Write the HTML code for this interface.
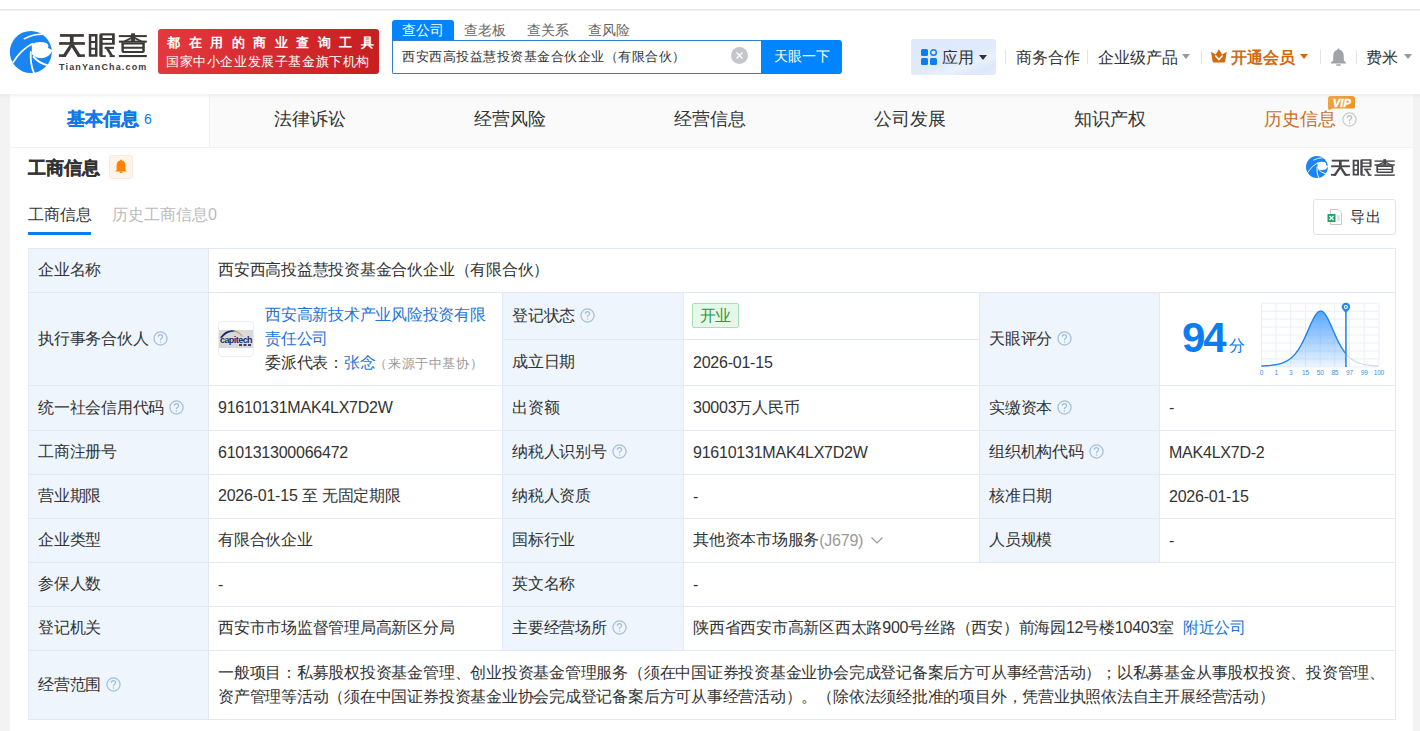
<!DOCTYPE html>
<html><head><meta charset="utf-8">
<style>
*{margin:0;padding:0;box-sizing:border-box}
html,body{width:1420px;height:731px;overflow:hidden}
body{background:#f3f3f3;font-family:"Liberation Sans",sans-serif;color:#333;position:relative;font-size:16px}
.a{position:absolute;white-space:nowrap}
#top{position:absolute;left:0;top:0;width:1420px;height:10px;background:#fff;border-bottom:1px solid #e6e6e6}
#hdr{position:absolute;left:0;top:11px;width:1420px;height:83px;background:#fff;}
#card{position:absolute;left:10px;top:94px;width:1403px;height:640px;background:#fff}
#shd{position:absolute;left:0;top:94px;width:1420px;height:5px;background:linear-gradient(rgba(0,0,0,.045),rgba(0,0,0,0))}
#tabs{position:absolute;left:10px;top:94px;width:1403px;height:54px;background:#fafafa;border-bottom:1px solid #f1f1f1}
.cell{display:flex;align-items:center;padding-left:9px;font-size:16px;color:#333;letter-spacing:-0.23px}
.q{display:inline-block;margin-left:5px;flex:none;position:relative;top:-1px}
.tag{display:inline-block;height:25px;line-height:23px;width:47px;text-align:center;margin-left:-1px;margin-top:-2px;border:1px solid #a6e0b4;background:#e6f8ea;color:#2b9a45;border-radius:2px;font-size:16px}
.lnk{color:#1f74d6}
.logo{position:absolute;left:9px;top:28px;width:36px;height:36px;border:1px solid #eee;border-radius:4px;background:#fff;overflow:hidden}
.logoin{position:absolute;left:1px;top:8px;width:32px;height:18px;background:#d9d9d9;color:#1b2f6b;font-size:8px;font-weight:700;font-style:italic;line-height:20px;text-align:center;letter-spacing:-0.3px}
</style></head><body>
<div id="top"></div>
<div id="hdr"></div>
<div id="card"></div>
<div id="tabs"></div>
<!-- header -->
<svg class="a" style="left:6px;top:27px" width="52" height="50" viewBox="0 0 52 50">
<circle cx="24.8" cy="25" r="21" fill="#1a85f2"/>
<path d="M25.7 17.1Q32.9 13.7 40.4 16.1Q43.6 18.5 41.8 20.8L46.5 23.3Q43 31 35.6 31.2Q29.5 31 26 27.4Z" fill="#fff"/>
<g fill="none" stroke="#fff" stroke-linecap="round">
<path d="M18.4 11.7Q27.4 7.2 36.3 7.3" stroke-width="1.6"/>
<path d="M7.2 35.3Q15 22.6 26.4 16.8" stroke-width="1.7"/>
<path d="M24.8 25Q24 37 28 46" stroke-width="1.8"/>
<path d="M27.6 29.8Q32.2 35.6 41.8 38.4" stroke-width="1.9"/>
</g>
</svg>
<svg class="a" style="left:56px;top:28px" width="96" height="32" viewBox="56 28 96 32">
<g fill="#3d3939">
<rect x="59.9" y="34.1" width="24" height="2.7"/>
<rect x="59.1" y="42.1" width="25.8" height="2.7"/>
<rect x="69.9" y="36" width="3.7" height="7"/>
<rect x="58.9" y="54.3" width="7" height="2.6"/>
<rect x="78.6" y="54.3" width="6.3" height="2.6"/>
<path d="M69.8 44.6H73.6L65.6 56.9H61.6Z"/>
<path d="M70 44.6H73.8L81.8 56.9H77.8Z"/>
<path d="M88.8 34.1H97.5V56.7H88.8ZM91.3 36.6V41.1H95V36.6ZM91.3 43.1V47.7H95V43.1ZM91.3 49.7V54.2H95V49.7Z" fill-rule="evenodd"/>
<path d="M101.3 33.3H114.8V44.8H102.6V55.2H105.8V57.1H101.3Q99.3 57.1 99.3 55.2V35.3Q99.3 33.3 101.3 33.3ZM102.6 35.5V38H112V35.5ZM102.6 40V42.7H112V40Z" fill-rule="evenodd"/>
<rect x="104.6" y="46.8" width="9.4" height="2.1"/>
<path d="M105.6 48.5H108.8L113.2 55.4H110Z"/>
<rect x="109.6" y="55.1" width="5.2" height="2"/>
<rect x="118.9" y="35.1" width="27.9" height="2"/>
<rect x="131.1" y="33.3" width="3.8" height="8"/>
<path d="M131.2 36.9L133 38.3L124 42.5H120.5Z"/>
<path d="M134.8 36.9L133 38.3L142 42.5H145.5Z"/>
<rect x="118.9" y="40.6" width="27.9" height="2.1"/>
<path d="M121.4 42.5H144.8V51Q144.8 53 142.8 53H123.4Q121.4 53 121.4 51ZM123.8 44.4V46.8H142.3V44.4ZM123.8 48.7V50.9H142.3V48.7Z" fill-rule="evenodd"/>
<rect x="118.9" y="55" width="27.9" height="2.1"/>
</g>
</svg>
<div class="a" style="left:59px;top:62px;font-size:9px;line-height:11px;font-weight:700;color:#3d3939;letter-spacing:1.15px">TianYanCha.com</div>
<div class="a" style="left:158px;top:29px;width:221px;height:45px;border-radius:3px;background:linear-gradient(90deg,#e3393e,#c71e22)"></div>
<div class="a" style="left:167px;top:34px;font-size:13px;font-weight:700;color:#fff;letter-spacing:8.5px">都在用的商业查询工具</div>
<div class="a" style="left:166px;top:53px;font-size:13px;color:#fff;letter-spacing:0.6px">国家中小企业发展子基金旗下机构</div>

<div class="a" style="left:392px;top:20px;width:62px;height:21px;background:#0084ff;border-radius:3px 3px 0 0"></div>
<div class="a" style="left:402px;top:21px;font-size:14px;line-height:19px;color:#fff">查公司</div>
<div class="a" style="left:464px;top:21px;font-size:14px;line-height:19px;color:#666">查老板</div>
<div class="a" style="left:527px;top:21px;font-size:14px;line-height:19px;color:#666">查关系</div>
<div class="a" style="left:588px;top:21px;font-size:14px;line-height:19px;color:#666">查风险</div>
<div class="a" style="left:392px;top:40px;width:370px;height:34px;border:1px solid #2f7dcc;border-right:0;border-radius:0 0 0 2px;background:#fff"></div>
<div class="a" style="left:402px;top:47px;font-size:13px;line-height:20px;color:#333;letter-spacing:0.5px">西安西高投益慧投资基金合伙企业（有限合伙）</div>
<div class="a" style="left:731px;top:47px;width:17px;height:17px;border-radius:50%;background:#c5c6cb"></div>
<svg class="a" style="left:731px;top:47px" width="17" height="17"><path d="M5.5 5.5L11.5 11.5M11.5 5.5L5.5 11.5" stroke="#fff" stroke-width="1.4"/></svg>
<div class="a" style="left:761px;top:40px;width:81px;height:34px;background:#0084ff;border-radius:0 3px 3px 0"></div>
<div class="a" style="left:774px;top:46px;font-size:14px;line-height:20px;color:#fff">天眼一下</div>

<div class="a" style="left:911px;top:39px;width:85px;height:36px;border-radius:3px;background:linear-gradient(160deg,#deeafb 0%,#dfebfb 55%,#e9f1fc 70%,#dbe7fa 85%,#e2ecfb 100%)"></div>
<svg class="a" style="left:921px;top:49px" width="16" height="16" viewBox="0 0 16 16">
<rect x="0" y="0" width="7" height="7" rx="1.5" fill="#0a7cf4"/>
<circle cx="12.5" cy="3.5" r="2.8" fill="none" stroke="#0a7cf4" stroke-width="1.4"/>
<rect x="0" y="9" width="7" height="7" rx="1.5" fill="#0a7cf4"/>
<rect x="9" y="9" width="7" height="7" rx="1.5" fill="#0a7cf4"/>
</svg>
<div class="a" style="left:942px;top:47px;font-size:16px;line-height:22px;color:#333">应用</div>
<svg class="a" style="left:979px;top:55px" width="8" height="5"><path d="M0 0H8L4 5Z" fill="#333"/></svg>
<div class="a" style="left:1005px;top:50px;width:1px;height:14px;background:#e3e3e3"></div>
<div class="a" style="left:1016px;top:47px;font-size:16px;line-height:22px;color:#333">商务合作</div>
<div class="a" style="left:1087px;top:50px;width:1px;height:14px;background:#e3e3e3"></div>
<div class="a" style="left:1098px;top:47px;font-size:16px;line-height:22px;color:#333">企业级产品</div>
<svg class="a" style="left:1182px;top:54px" width="8" height="5"><path d="M0 0H8L4 5Z" fill="#999"/></svg>
<div class="a" style="left:1201px;top:50px;width:1px;height:14px;background:#e3e3e3"></div>
<svg class="a" style="left:1211px;top:49px" width="16" height="14" viewBox="0 0 16 14">
<path d="M0 2.8L4.6 5.6L7.9 0.2L11.2 5.6L15.7 2.8L14.1 12.8Q13.9 13.6 13 13.6H2.8Q1.9 13.6 1.7 12.8Z" fill="#d4690c"/>
<path d="M4.3 6.6L7.9 10.6L11.6 6.6" stroke="#fff" stroke-width="1.5" fill="none"/>
</svg>
<div class="a" style="left:1231px;top:47px;font-size:16px;line-height:22px;color:#d4690c;font-weight:700">开通会员</div>
<svg class="a" style="left:1300px;top:54px" width="8" height="5"><path d="M0 0H8L4 5Z" fill="#d4690c"/></svg>
<div class="a" style="left:1320px;top:50px;width:1px;height:14px;background:#e3e3e3"></div>
<svg class="a" style="left:1330px;top:48px" width="17" height="18" viewBox="0 0 17 18">
<path d="M8.5 0.5C9.3 0.5 9.6 1 9.6 1.7C12.5 2.4 13.8 4.8 13.8 8V12.5L16 14.5V15.5H1V14.5L3.2 12.5V8C3.2 4.8 4.5 2.4 7.4 1.7C7.4 1 7.7 0.5 8.5 0.5Z" fill="#a0a3a8"/>
<rect x="6" y="16.2" width="5" height="1.6" rx="0.8" fill="#a0a3a8"/>
</svg>
<div class="a" style="left:1356px;top:50px;width:1px;height:14px;background:#e3e3e3"></div>
<div class="a" style="left:1366px;top:47px;font-size:16px;line-height:22px;color:#333">费米</div>
<svg class="a" style="left:1404px;top:54px" width="8" height="5"><path d="M0 0H8L4 5Z" fill="#999"/></svg>
<!-- tabs -->
<div class="a" style="left:10px;top:94px;width:200px;height:53px;background:#fff;border-right:1px solid #efefef"></div>
<div class="a" style="left:67px;top:107px;font-size:18px;line-height:24px;color:#1079ea;font-weight:700;-webkit-text-stroke:0.35px #1079ea">基本信息<span style="font-size:14px;font-weight:400;margin-left:5px;-webkit-text-stroke:0;position:relative;top:-1px">6</span></div>
<div class="a" style="left:274px;top:107px;font-size:18px;line-height:24px;color:#333">法律诉讼</div>
<div class="a" style="left:474px;top:107px;font-size:18px;line-height:24px;color:#333">经营风险</div>
<div class="a" style="left:674px;top:107px;font-size:18px;line-height:24px;color:#333">经营信息</div>
<div class="a" style="left:874px;top:107px;font-size:18px;line-height:24px;color:#333">公司发展</div>
<div class="a" style="left:1074px;top:107px;font-size:18px;line-height:24px;color:#333">知识产权</div>
<div class="a" style="left:1264px;top:107px;font-size:18px;line-height:24px;color:#c66f2a">历史信息</div>
<svg class="a" style="left:1342px;top:111.5px" width="15" height="15" viewBox="0 0 15 15"><circle cx="7.5" cy="7.5" r="6.6" fill="none" stroke="#c6cace" stroke-width="1.25"/><path d="M5.3 5.8Q5.3 3.6 7.5 3.6Q9.6 3.6 9.6 5.5Q9.6 6.6 8.5 7.2Q7.5 7.7 7.5 8.9V9.3" fill="none" stroke="#b9bec4" stroke-width="1.25"/><circle cx="7.5" cy="11" r="0.75" fill="#b9bec4"/></svg>
<svg class="a" style="left:1327px;top:95px" width="30" height="17" viewBox="0 0 30 17">
<defs><linearGradient id="vg" x1="0" x2="1" y1="0" y2="1"><stop offset="0" stop-color="#f3aa48"/><stop offset="1" stop-color="#e98f22"/></linearGradient></defs>
<path d="M3.5 1H25.5Q28 1 28 3.5V11Q28 13.6 25.5 13.6H5.2L1.8 15.6L1 12.2V3.5Q1 1 3.5 1Z" fill="url(#vg)"/>
<text x="14.8" y="11.6" font-family="Liberation Sans" font-weight="700" font-style="italic" font-size="11" fill="#fff" stroke="#fff" stroke-width="0.4" text-anchor="middle" letter-spacing="0.2">VIP</text>
</svg>

<!-- section title -->
<div class="a" style="left:28px;top:156px;font-size:18px;line-height:24px;font-weight:700;color:#333;-webkit-text-stroke:0.35px #333">工商信息</div>
<div class="a" style="left:109px;top:155px;width:24px;height:24px;border-radius:3px;background:#fff4ea;border:1px solid #fcebdc"></div>
<svg class="a" style="left:115px;top:159px" width="12" height="15" viewBox="0 0 12 15">
<path d="M6 0.6Q6.8 0.6 6.9 1.5Q10.4 2.3 10.4 6.5V11L11.8 12.6H0.2L1.6 11V6.5Q1.6 2.3 5.1 1.5Q5.2 0.6 6 0.6Z" fill="#ff8206"/>
<path d="M4.2 12.6Q4.6 14.2 6 14.2Q7.4 14.2 7.8 12.6Z" fill="#ff8206"/>
</svg>
<svg class="a" style="left:1306px;top:156.3px" width="21.9" height="21.9" viewBox="3.8 4 42 42">
<circle cx="24.8" cy="25" r="21" fill="#1a85f2"/>
<path d="M25.7 17.1Q32.9 13.7 40.4 16.1Q43.6 18.5 41.8 20.8L46.5 23.3Q43 31 35.6 31.2Q29.5 31 26 27.4Z" fill="#fff"/>
<g fill="none" stroke="#fff" stroke-linecap="round">
<path d="M18.4 11.7Q27.4 7.2 36.3 7.3" stroke-width="1.6"/>
<path d="M7.2 35.3Q15 22.6 26.4 16.8" stroke-width="1.7"/>
<path d="M24.8 25Q24 37 28 46" stroke-width="1.8"/>
<path d="M27.6 29.8Q32.2 35.6 41.8 38.4" stroke-width="1.9"/>
</g>
</svg><svg class="a" style="left:1331.3px;top:159.2px" width="64.1" height="16.8" viewBox="58.9 33.1 88.4 23.9" preserveAspectRatio="none">
<g fill="#48474c">
<rect x="59.9" y="34.1" width="24" height="2.7"/>
<rect x="59.1" y="42.1" width="25.8" height="2.7"/>
<rect x="69.9" y="36" width="3.7" height="7"/>
<rect x="58.9" y="54.3" width="7" height="2.6"/>
<rect x="78.6" y="54.3" width="6.3" height="2.6"/>
<path d="M69.8 44.6H73.6L65.6 56.9H61.6Z"/>
<path d="M70 44.6H73.8L81.8 56.9H77.8Z"/>
<path d="M88.8 34.1H97.5V56.7H88.8ZM91.3 36.6V41.1H95V36.6ZM91.3 43.1V47.7H95V43.1ZM91.3 49.7V54.2H95V49.7Z" fill-rule="evenodd"/>
<path d="M101.3 33.3H114.8V44.8H102.6V55.2H105.8V57.1H101.3Q99.3 57.1 99.3 55.2V35.3Q99.3 33.3 101.3 33.3ZM102.6 35.5V38H112V35.5ZM102.6 40V42.7H112V40Z" fill-rule="evenodd"/>
<rect x="104.6" y="46.8" width="9.4" height="2.1"/>
<path d="M105.6 48.5H108.8L113.2 55.4H110Z"/>
<rect x="109.6" y="55.1" width="5.2" height="2"/>
<rect x="118.9" y="35.1" width="27.9" height="2"/>
<rect x="131.1" y="33.3" width="3.8" height="8"/>
<path d="M131.2 36.9L133 38.3L124 42.5H120.5Z"/>
<path d="M134.8 36.9L133 38.3L142 42.5H145.5Z"/>
<rect x="118.9" y="40.6" width="27.9" height="2.1"/>
<path d="M121.4 42.5H144.8V51Q144.8 53 142.8 53H123.4Q121.4 53 121.4 51ZM123.8 44.4V46.8H142.3V44.4ZM123.8 48.7V50.9H142.3V48.7Z" fill-rule="evenodd"/>
<rect x="118.9" y="55" width="27.9" height="2.1"/>
</g>
</svg>

<div class="a" style="left:28px;top:204px;font-size:16px;line-height:22px;color:#333">工商信息</div>
<div class="a" style="left:28px;top:232px;width:63px;height:3px;background:#0a7cf4"></div>
<div class="a" style="left:112px;top:204px;font-size:16px;line-height:22px;color:#bbb">历史工商信息0</div>
<div class="a" style="left:1313px;top:199px;width:83px;height:36px;border:1px solid #e3e3e3;border-radius:3px;background:#fff"></div>
<svg class="a" style="left:1327px;top:209px" width="16" height="16" viewBox="0 0 16 16">
<path d="M3.5 0.5H11L14.5 4V15.5H3.5Z" fill="#fff" stroke="#c8c8c8"/>
<rect x="0.5" y="5" width="8" height="8" fill="#21a366"/>
<path d="M2.5 7L6.5 11M6.5 7L2.5 11" stroke="#fff" stroke-width="1.3"/>
<path d="M10 7H13M10 9H13M10 11H13" stroke="#c8c8c8"/>
</svg>
<div class="a" style="left:1350px;top:206px;font-size:15px;line-height:22px;color:#333;letter-spacing:1px">导出</div>
<div class="a" style="left:28px;top:248px;width:1368px;height:472px;background:#e2e9f1"></div>
<div class="a cell" style="left:29px;top:249px;width:179px;height:43px;background:#eef5fc;">企业名称</div>
<div class="a cell" style="left:209px;top:249px;width:1186px;height:43px;background:#fff;">西安西高投益慧投资基金合伙企业（有限合伙）</div>
<div class="a cell" style="left:29px;top:293px;width:179px;height:92px;background:#eef5fc;">执行事务合伙人<svg class="q" width="15" height="15" viewBox="0 0 15 15"><circle cx="7.5" cy="7.5" r="6.6" fill="none" stroke="#a3bedb" stroke-width="1.25"/><path d="M5.3 5.8Q5.3 3.6 7.5 3.6Q9.6 3.6 9.6 5.5Q9.6 6.6 8.5 7.2Q7.5 7.7 7.5 8.9V9.3" fill="none" stroke="#a3bedb" stroke-width="1.25"/><circle cx="7.5" cy="11" r="0.75" fill="#a3bedb"/></svg></div>
<div class="a cell" style="left:209px;top:293px;width:293px;height:92px;background:#fff;"><div class="logo"><svg style="position:absolute;left:0;top:0" width="34" height="34" viewBox="0 0 34 34"><rect x="0" y="8" width="34" height="18" fill="#d9d9d9"/><path d="M0.8 15.8Q7 7 15.5 8.6L16 9.6Q9 9.2 3 15.8Z" fill="#1a2d66"/><path d="M15.5 8.6Q21 9.6 23.6 14.6L22.8 14.8Q20 10.6 15.6 9.6Z" fill="#b99a45"/><text x="17" y="21.4" font-family="Liberation Sans" font-weight="700" font-size="9" fill="#1a2d66" text-anchor="middle" letter-spacing="-0.55">capitech</text><path d="M20 23H23M24.5 23H27.5M29 23H32" stroke="#3a4670" stroke-width="2"/></svg></div>
<div class="a" style="left:56px;top:10px;line-height:24px;white-space:normal;width:225px"><span class="lnk">西安高新技术产业风险投资有限<br>责任公司</span><br>委派代表：<span class="lnk">张念</span><span style="color:#999;font-size:13px;margin-left:-1px;letter-spacing:0.6px">（来源于中基协）</span></div></div>
<div class="a cell" style="left:503px;top:293px;width:180px;height:46px;background:#eef5fc;">登记状态<svg class="q" width="15" height="15" viewBox="0 0 15 15"><circle cx="7.5" cy="7.5" r="6.6" fill="none" stroke="#a3bedb" stroke-width="1.25"/><path d="M5.3 5.8Q5.3 3.6 7.5 3.6Q9.6 3.6 9.6 5.5Q9.6 6.6 8.5 7.2Q7.5 7.7 7.5 8.9V9.3" fill="none" stroke="#a3bedb" stroke-width="1.25"/><circle cx="7.5" cy="11" r="0.75" fill="#a3bedb"/></svg></div>
<div class="a cell" style="left:684px;top:293px;width:295px;height:46px;background:#fff;"><span class="tag">开业</span></div>
<div class="a cell" style="left:503px;top:340px;width:180px;height:45px;background:#eef5fc;">成立日期</div>
<div class="a cell" style="left:684px;top:340px;width:295px;height:45px;background:#fff;">2026-01-15</div>
<div class="a cell" style="left:980px;top:293px;width:179px;height:92px;background:#eef5fc;">天眼评分<svg class="q" width="15" height="15" viewBox="0 0 15 15"><circle cx="7.5" cy="7.5" r="6.6" fill="none" stroke="#a3bedb" stroke-width="1.25"/><path d="M5.3 5.8Q5.3 3.6 7.5 3.6Q9.6 3.6 9.6 5.5Q9.6 6.6 8.5 7.2Q7.5 7.7 7.5 8.9V9.3" fill="none" stroke="#a3bedb" stroke-width="1.25"/><circle cx="7.5" cy="11" r="0.75" fill="#a3bedb"/></svg></div>
<div class="a cell" style="left:1160px;top:293px;width:235px;height:92px;background:#fff;"><div class="a" style="left:22px;top:22px;font-size:42px;line-height:46px;font-weight:700;color:#0a7cf4;letter-spacing:-2px">94</div><div class="a" style="left:69px;top:43px;font-size:16px;line-height:20px;color:#0a7cf4">分</div>
<svg class="a" style="left:100px;top:8px" width="130" height="80" viewBox="0 0 130 80">
<defs><linearGradient id="sg" x1="0" x2="0" y1="0" y2="1"><stop offset="0" stop-color="#3a98ff" stop-opacity=".85"/><stop offset="1" stop-color="#3a98ff" stop-opacity=".1"/></linearGradient></defs>
<path d="M1.4 2.2V65.9 M16.1 2.2V65.9 M30.8 2.2V65.9 M45.5 2.2V65.9 M60.2 2.2V65.9 M74.8 2.2V65.9 M89.5 2.2V65.9 M104.2 2.2V65.9 M118.9 2.2V65.9 M1.4 2.2H118.9 M1.4 10.2H118.9 M1.4 18.1H118.9 M1.4 26.1H118.9 M1.4 34.0H118.9 M1.4 42.0H118.9 M1.4 50.0H118.9 M1.4 57.9H118.9 M1.4 65.9H118.9" stroke="#e9eff7" stroke-width="1" fill="none"/>
<path d="M1.40 65.03 L2.40 64.99 L3.40 64.95 L4.40 64.89 L5.40 64.84 L6.40 64.77 L7.40 64.70 L8.40 64.62 L9.40 64.53 L10.40 64.44 L11.40 64.33 L12.40 64.21 L13.40 64.07 L14.40 63.92 L15.40 63.76 L16.40 63.57 L17.40 63.37 L18.40 63.14 L19.40 62.89 L20.40 62.61 L21.40 62.30 L22.40 61.95 L23.40 61.57 L24.40 61.15 L25.40 60.69 L26.40 60.18 L27.40 59.61 L28.40 58.99 L29.40 58.31 L30.40 57.56 L31.40 56.74 L32.40 55.84 L33.40 54.86 L34.40 53.79 L35.40 52.62 L36.40 51.36 L37.40 50.00 L38.40 48.53 L39.40 46.96 L40.40 45.28 L41.40 43.49 L42.40 41.60 L43.40 39.61 L44.40 37.53 L45.40 35.37 L46.40 33.14 L47.40 30.87 L48.40 28.58 L49.40 26.28 L50.40 24.01 L51.40 21.80 L52.40 19.69 L53.40 17.70 L54.40 15.87 L55.40 14.25 L56.40 12.86 L57.40 11.72 L58.40 10.87 L59.40 10.33 L60.40 10.11 L61.40 10.20 L62.40 10.62 L63.40 11.35 L64.40 12.37 L65.40 13.66 L66.40 15.20 L67.40 16.95 L68.40 18.87 L69.40 20.94 L70.40 23.12 L71.40 25.37 L72.40 27.65 L73.40 29.95 L74.40 32.24 L75.40 34.48 L76.40 36.67 L77.40 38.79 L78.40 40.81 L79.40 42.74 L80.40 44.57 L81.40 46.30 L82.40 47.92 L83.40 49.43 L84.40 50.83 L85.40 52.13 L86.40 53.33 L87.40 54.44 L88.40 55.46 L89.40 56.39 L90.40 57.24 L91.40 58.02 L92.40 58.73 L93.40 59.37 L94.40 59.96 L95.40 60.49 L96.40 60.97 L97.40 61.41 L98.40 61.81 L99.40 62.16 L100.40 62.49 L101.40 62.78 L102.40 63.04 L103.40 63.28 L104.40 63.49 L105.40 63.68 L106.40 63.86 L107.40 64.01 L108.40 64.15 L109.40 64.28 L110.40 64.39 L111.40 64.50 L112.40 64.59 L113.40 64.67 L114.40 64.74 L115.40 64.81 L116.40 64.87 L117.40 64.93 L118.40 64.97" fill="none" stroke="#d3d9e0" stroke-width="1.2"/>
<path d="M1.40 65.03 L2.40 64.99 L3.40 64.95 L4.40 64.89 L5.40 64.84 L6.40 64.77 L7.40 64.70 L8.40 64.62 L9.40 64.53 L10.40 64.44 L11.40 64.33 L12.40 64.21 L13.40 64.07 L14.40 63.92 L15.40 63.76 L16.40 63.57 L17.40 63.37 L18.40 63.14 L19.40 62.89 L20.40 62.61 L21.40 62.30 L22.40 61.95 L23.40 61.57 L24.40 61.15 L25.40 60.69 L26.40 60.18 L27.40 59.61 L28.40 58.99 L29.40 58.31 L30.40 57.56 L31.40 56.74 L32.40 55.84 L33.40 54.86 L34.40 53.79 L35.40 52.62 L36.40 51.36 L37.40 50.00 L38.40 48.53 L39.40 46.96 L40.40 45.28 L41.40 43.49 L42.40 41.60 L43.40 39.61 L44.40 37.53 L45.40 35.37 L46.40 33.14 L47.40 30.87 L48.40 28.58 L49.40 26.28 L50.40 24.01 L51.40 21.80 L52.40 19.69 L53.40 17.70 L54.40 15.87 L55.40 14.25 L56.40 12.86 L57.40 11.72 L58.40 10.87 L59.40 10.33 L60.40 10.11 L61.40 10.20 L62.40 10.62 L63.40 11.35 L64.40 12.37 L65.40 13.66 L66.40 15.20 L67.40 16.95 L68.40 18.87 L69.40 20.94 L70.40 23.12 L71.40 25.37 L72.40 27.65 L73.40 29.95 L74.40 32.24 L75.40 34.48 L76.40 36.67 L77.40 38.79 L78.40 40.81 L79.40 42.74 L80.40 44.57 L81.40 46.30 L82.40 47.92 L83.40 49.43 L84.40 50.83 L85.40 52.13 L85.90 52.74 L85.90 65.40 L1.40 65.40 Z" fill="url(#sg)"/>
<path d="M1.40 65.03 L2.40 64.99 L3.40 64.95 L4.40 64.89 L5.40 64.84 L6.40 64.77 L7.40 64.70 L8.40 64.62 L9.40 64.53 L10.40 64.44 L11.40 64.33 L12.40 64.21 L13.40 64.07 L14.40 63.92 L15.40 63.76 L16.40 63.57 L17.40 63.37 L18.40 63.14 L19.40 62.89 L20.40 62.61 L21.40 62.30 L22.40 61.95 L23.40 61.57 L24.40 61.15 L25.40 60.69 L26.40 60.18 L27.40 59.61 L28.40 58.99 L29.40 58.31 L30.40 57.56 L31.40 56.74 L32.40 55.84 L33.40 54.86 L34.40 53.79 L35.40 52.62 L36.40 51.36 L37.40 50.00 L38.40 48.53 L39.40 46.96 L40.40 45.28 L41.40 43.49 L42.40 41.60 L43.40 39.61 L44.40 37.53 L45.40 35.37 L46.40 33.14 L47.40 30.87 L48.40 28.58 L49.40 26.28 L50.40 24.01 L51.40 21.80 L52.40 19.69 L53.40 17.70 L54.40 15.87 L55.40 14.25 L56.40 12.86 L57.40 11.72 L58.40 10.87 L59.40 10.33 L60.40 10.11 L61.40 10.20 L62.40 10.62 L63.40 11.35 L64.40 12.37 L65.40 13.66 L66.40 15.20 L67.40 16.95 L68.40 18.87 L69.40 20.94 L70.40 23.12 L71.40 25.37 L72.40 27.65 L73.40 29.95 L74.40 32.24 L75.40 34.48 L76.40 36.67 L77.40 38.79 L78.40 40.81 L79.40 42.74 L80.40 44.57 L81.40 46.30 L82.40 47.92 L83.40 49.43 L84.40 50.83 L85.40 52.13 L85.90 52.74" fill="none" stroke="#1f82ea" stroke-width="1.3"/>
<path d="M85.9 9V65.9" stroke="#2a88ec" stroke-width="1.6"/>
<path d="M81.6 6A4.3 4.3 0 1 1 90.2 6Q89.9 8.5 85.9 12Q81.9 8.5 81.6 6Z" fill="#2a88ec"/>
<circle cx="85.9" cy="6" r="2" fill="#fff"/><circle cx="85.9" cy="6" r="1" fill="#2a88ec"/>
<g font-family="Liberation Sans" font-size="6.5" fill="#3a8ee8" text-anchor="middle"><text x="1.4" y="74.0">0</text><text x="16.1" y="74.0">1</text><text x="30.8" y="74.0">3</text><text x="45.5" y="74.0">15</text><text x="60.2" y="74.0">50</text><text x="74.8" y="74.0">85</text><text x="89.5" y="74.0">97</text><text x="104.2" y="74.0">99</text><text x="118.9" y="74.0">100</text></g>
</svg>
</div>
<div class="a cell" style="left:29px;top:386px;width:179px;height:44px;background:#eef5fc;">统一社会信用代码<svg class="q" width="15" height="15" viewBox="0 0 15 15"><circle cx="7.5" cy="7.5" r="6.6" fill="none" stroke="#a3bedb" stroke-width="1.25"/><path d="M5.3 5.8Q5.3 3.6 7.5 3.6Q9.6 3.6 9.6 5.5Q9.6 6.6 8.5 7.2Q7.5 7.7 7.5 8.9V9.3" fill="none" stroke="#a3bedb" stroke-width="1.25"/><circle cx="7.5" cy="11" r="0.75" fill="#a3bedb"/></svg></div>
<div class="a cell" style="left:209px;top:386px;width:293px;height:44px;background:#fff;">91610131MAK4LX7D2W</div>
<div class="a cell" style="left:503px;top:386px;width:180px;height:44px;background:#eef5fc;">出资额</div>
<div class="a cell" style="left:684px;top:386px;width:295px;height:44px;background:#fff;">30003万人民币</div>
<div class="a cell" style="left:980px;top:386px;width:179px;height:44px;background:#eef5fc;">实缴资本<svg class="q" width="15" height="15" viewBox="0 0 15 15"><circle cx="7.5" cy="7.5" r="6.6" fill="none" stroke="#a3bedb" stroke-width="1.25"/><path d="M5.3 5.8Q5.3 3.6 7.5 3.6Q9.6 3.6 9.6 5.5Q9.6 6.6 8.5 7.2Q7.5 7.7 7.5 8.9V9.3" fill="none" stroke="#a3bedb" stroke-width="1.25"/><circle cx="7.5" cy="11" r="0.75" fill="#a3bedb"/></svg></div>
<div class="a cell" style="left:1160px;top:386px;width:235px;height:44px;background:#fff;">-</div>
<div class="a cell" style="left:29px;top:431px;width:179px;height:43px;background:#eef5fc;">工商注册号</div>
<div class="a cell" style="left:209px;top:431px;width:293px;height:43px;background:#fff;">610131300066472</div>
<div class="a cell" style="left:503px;top:431px;width:180px;height:43px;background:#eef5fc;">纳税人识别号<svg class="q" width="15" height="15" viewBox="0 0 15 15"><circle cx="7.5" cy="7.5" r="6.6" fill="none" stroke="#a3bedb" stroke-width="1.25"/><path d="M5.3 5.8Q5.3 3.6 7.5 3.6Q9.6 3.6 9.6 5.5Q9.6 6.6 8.5 7.2Q7.5 7.7 7.5 8.9V9.3" fill="none" stroke="#a3bedb" stroke-width="1.25"/><circle cx="7.5" cy="11" r="0.75" fill="#a3bedb"/></svg></div>
<div class="a cell" style="left:684px;top:431px;width:295px;height:43px;background:#fff;">91610131MAK4LX7D2W</div>
<div class="a cell" style="left:980px;top:431px;width:179px;height:43px;background:#eef5fc;">组织机构代码<svg class="q" width="15" height="15" viewBox="0 0 15 15"><circle cx="7.5" cy="7.5" r="6.6" fill="none" stroke="#a3bedb" stroke-width="1.25"/><path d="M5.3 5.8Q5.3 3.6 7.5 3.6Q9.6 3.6 9.6 5.5Q9.6 6.6 8.5 7.2Q7.5 7.7 7.5 8.9V9.3" fill="none" stroke="#a3bedb" stroke-width="1.25"/><circle cx="7.5" cy="11" r="0.75" fill="#a3bedb"/></svg></div>
<div class="a cell" style="left:1160px;top:431px;width:235px;height:43px;background:#fff;">MAK4LX7D-2</div>
<div class="a cell" style="left:29px;top:475px;width:179px;height:43px;background:#eef5fc;">营业期限</div>
<div class="a cell" style="left:209px;top:475px;width:293px;height:43px;background:#fff;">2026-01-15 至 无固定期限</div>
<div class="a cell" style="left:503px;top:475px;width:180px;height:43px;background:#eef5fc;">纳税人资质</div>
<div class="a cell" style="left:684px;top:475px;width:295px;height:43px;background:#fff;">-</div>
<div class="a cell" style="left:980px;top:475px;width:179px;height:43px;background:#eef5fc;">核准日期</div>
<div class="a cell" style="left:1160px;top:475px;width:235px;height:43px;background:#fff;">2026-01-15</div>
<div class="a cell" style="left:29px;top:519px;width:179px;height:43px;background:#eef5fc;">企业类型</div>
<div class="a cell" style="left:209px;top:519px;width:293px;height:43px;background:#fff;">有限合伙企业</div>
<div class="a cell" style="left:503px;top:519px;width:180px;height:43px;background:#eef5fc;">国标行业</div>
<div class="a cell" style="left:684px;top:519px;width:295px;height:43px;background:#fff;">其他资本市场服务<span style="color:#999">(J679)</span><svg style="margin-left:8px;vertical-align:middle" width="12" height="7"><path d="M0.5 0.5L6 6L11.5 0.5" fill="none" stroke="#999" stroke-width="1.2"/></svg></div>
<div class="a cell" style="left:980px;top:519px;width:179px;height:43px;background:#eef5fc;">人员规模</div>
<div class="a cell" style="left:1160px;top:519px;width:235px;height:43px;background:#fff;">-</div>
<div class="a cell" style="left:29px;top:563px;width:179px;height:43px;background:#eef5fc;">参保人数</div>
<div class="a cell" style="left:209px;top:563px;width:293px;height:43px;background:#fff;">-</div>
<div class="a cell" style="left:503px;top:563px;width:180px;height:43px;background:#eef5fc;">英文名称</div>
<div class="a cell" style="left:684px;top:563px;width:711px;height:43px;background:#fff;">-</div>
<div class="a cell" style="left:29px;top:607px;width:179px;height:43px;background:#eef5fc;">登记机关</div>
<div class="a cell" style="left:209px;top:607px;width:293px;height:43px;background:#fff;">西安市市场监督管理局高新区分局</div>
<div class="a cell" style="left:503px;top:607px;width:180px;height:43px;background:#eef5fc;">主要经营场所<svg class="q" width="15" height="15" viewBox="0 0 15 15"><circle cx="7.5" cy="7.5" r="6.6" fill="none" stroke="#a3bedb" stroke-width="1.25"/><path d="M5.3 5.8Q5.3 3.6 7.5 3.6Q9.6 3.6 9.6 5.5Q9.6 6.6 8.5 7.2Q7.5 7.7 7.5 8.9V9.3" fill="none" stroke="#a3bedb" stroke-width="1.25"/><circle cx="7.5" cy="11" r="0.75" fill="#a3bedb"/></svg></div>
<div class="a cell" style="left:684px;top:607px;width:711px;height:43px;background:#fff;">陕西省西安市高新区西太路900号丝路（西安）前海园12号楼10403室<span class="lnk" style="margin-left:9px">附近公司</span></div>
<div class="a cell" style="left:29px;top:651px;width:179px;height:68px;background:#eef5fc;">经营范围<svg class="q" width="15" height="15" viewBox="0 0 15 15"><circle cx="7.5" cy="7.5" r="6.6" fill="none" stroke="#a3bedb" stroke-width="1.25"/><path d="M5.3 5.8Q5.3 3.6 7.5 3.6Q9.6 3.6 9.6 5.5Q9.6 6.6 8.5 7.2Q7.5 7.7 7.5 8.9V9.3" fill="none" stroke="#a3bedb" stroke-width="1.25"/><circle cx="7.5" cy="11" r="0.75" fill="#a3bedb"/></svg></div>
<div class="a cell" style="left:209px;top:651px;width:1186px;height:68px;background:#fff;"><div style="line-height:24px">一般项目：私募股权投资基金管理、创业投资基金管理服务（须在中国证券投资基金业协会完成登记备案后方可从事经营活动）；以私募基金从事股权投资、投资管理、<br>资产管理等活动（须在中国证券投资基金业协会完成登记备案后方可从事经营活动）。（除依法须经批准的项目外，凭营业执照依法自主开展经营活动）</div></div>
<div id="shd"></div>
</body></html>
